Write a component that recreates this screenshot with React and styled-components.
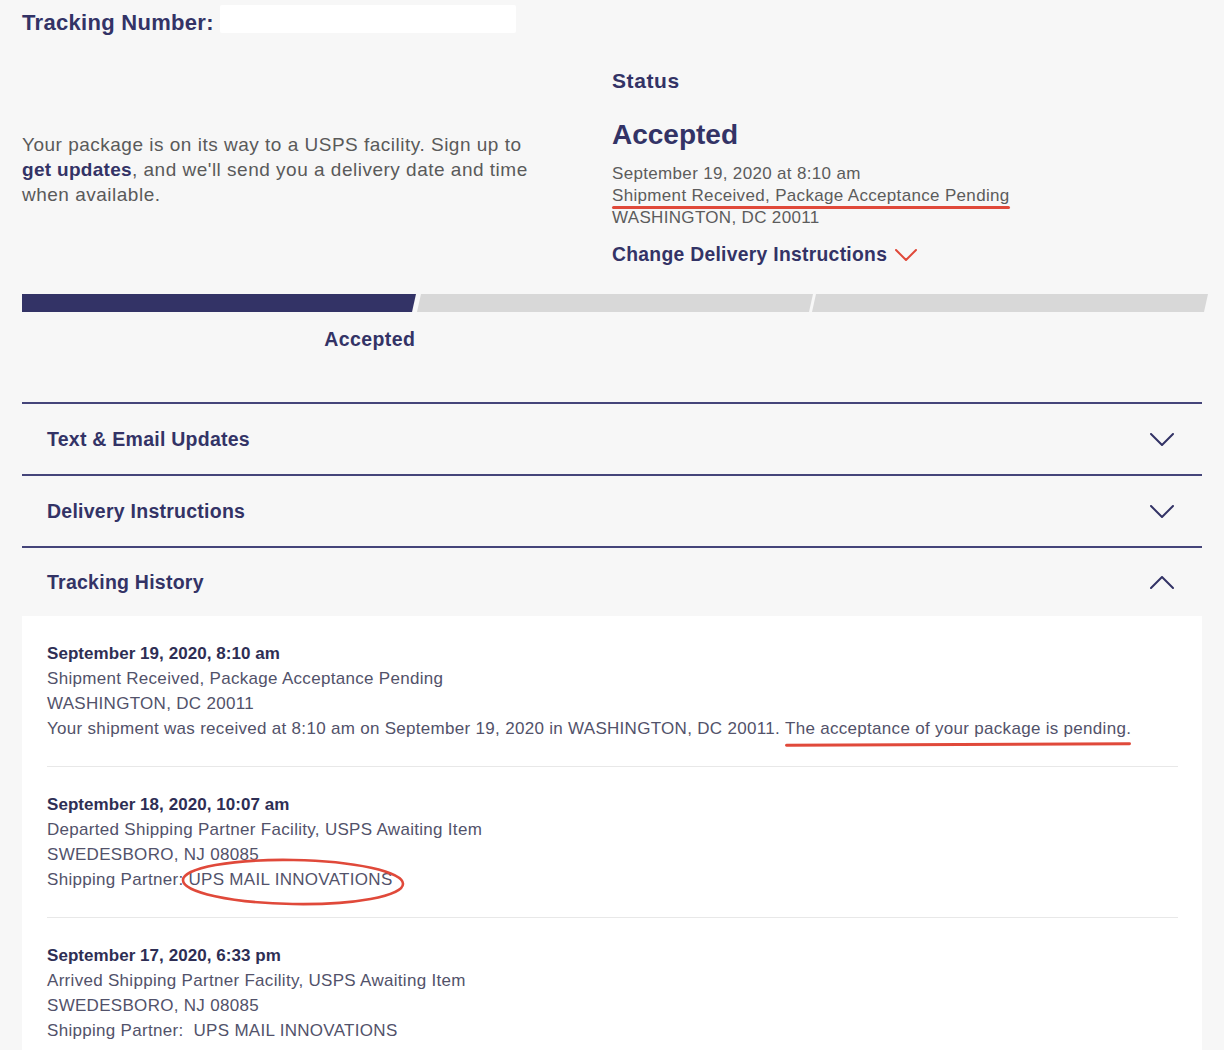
import React from "react";
import styled, { createGlobalStyle } from "styled-components";

const NAVY = "#333366";
const RED = "#e0493a";

const Global = createGlobalStyle`
  html, body { margin: 0; padding: 0; }
  body {
    background: #f7f7f7;
    font-family: "Liberation Sans", Arial, Helvetica, sans-serif;
    -webkit-font-smoothing: antialiased;
  }
`;

const Page = styled.div`
  width: 1180px;
  padding: 9px 22px 0 22px;
`;

const TrackingRow = styled.div`
  display: flex;
  align-items: center;
  height: 28px;
`;

const TrackingLabel = styled.h1`
  margin: 0;
  font-size: 22px;
  font-weight: 700;
  color: ${NAVY};
  letter-spacing: 0.3px;
`;

const NumberBox = styled.div`
  width: 296px;
  height: 28px;
  margin-left: 6px;
  margin-top: -8px;
  background: #ffffff;
  border-radius: 2px;
`;

const Summary = styled.section`
  display: grid;
  grid-template-columns: 590px 1fr;
  align-items: center;
  margin-top: 31px;
`;

const Intro = styled.p`
  margin: 0;
  font-size: 19px;
  line-height: 25px;
  letter-spacing: 0.5px;
  color: #5a5a5a;
  padding-top: 4px;
`;

const Strong = styled.strong`
  color: ${NAVY};
  font-weight: 700;
  letter-spacing: 0.3px;
`;

const StatusCol = styled.div`
  display: flex;
  flex-direction: column;
`;

const StatusLabel = styled.h2`
  margin: 0;
  font-size: 21px;
  line-height: 26px;
  font-weight: 700;
  letter-spacing: 0.6px;
  color: ${NAVY};
`;

const StatusValue = styled.div`
  margin-top: 24px;
  font-size: 28px;
  line-height: 34px;
  font-weight: 700;
  color: ${NAVY};
`;

const Details = styled.div`
  margin-top: 11px;
  font-size: 17px;
  line-height: 22px;
  letter-spacing: 0.33px;
  color: #5c5c5c;
`;

const Marked = styled.span`
  position: relative;
  display: inline-block;
  &::after {
    content: "";
    position: absolute;
    left: 0;
    right: ${(p) => p.$right || 0}px;
    bottom: ${(p) => p.$bottom || 0}px;
    height: 3px;
    border-radius: 2px;
    background: ${RED};
    transform: rotate(${(p) => p.$rot || 0}deg);
  }
`;

const ChangeLink = styled.a`
  display: flex;
  align-items: center;
  gap: 8px;
  margin-top: 14px;
  font-size: 19.3px;
  line-height: 24px;
  font-weight: 700;
  letter-spacing: 0.3px;
  color: ${NAVY};
  text-decoration: none;
`;

const Progress = styled.div`
  display: flex;
  margin-top: 27px;
  margin-right: -6px;
  height: 18px;
`;

const Segment = styled.div`
  flex: 1;
  background: ${(p) => (p.$done ? NAVY : "#d8d8d8")};
  margin-left: ${(p) => (p.$first ? 0 : -1)}px;
  clip-path: ${(p) =>
    p.$first
      ? "polygon(0 0, calc(100% - 2px) 0, calc(100% - 6px) 100%, 0 100%)"
      : "polygon(4px 0, 100% 0, calc(100% - 4px) 100%, 0 100%)"};
`;

const Labels = styled.div`
  display: grid;
  grid-template-columns: repeat(3, 1fr);
  margin-right: -6px;
  margin-top: 16px;
`;

const StepLabel = styled.div`
  text-align: right;
  padding-right: 2px;
  font-size: 19.5px;
  line-height: 22px;
  font-weight: 700;
  letter-spacing: 0.4px;
  color: ${NAVY};
`;

const Accordion = styled.div`
  margin-top: 52px;
`;

const AccRow = styled.div`
  display: flex;
  align-items: center;
  justify-content: space-between;
  height: ${(p) => (p.$open ? 68 : 70)}px;
  border-top: 2px solid #45457a;
  padding: 0 28px 0 25px;
`;

const AccTitle = styled.h3`
  margin: 0;
  font-size: 19.5px;
  font-weight: 700;
  letter-spacing: 0.25px;
  color: ${NAVY};
`;

const History = styled.div`
  background: #ffffff;
  padding: 0 24px 0 25px;
`;

const Entry = styled.div`
  padding: 25px 0;
  border-bottom: 1px solid #e8e8e8;
  font-size: 17px;
  line-height: 25px;
  letter-spacing: 0.3px;
  color: #52526a;
  &:last-child { border-bottom: none; }
`;

const EntryDate = styled.div`
  font-weight: 700;
  color: #2e2e54;
  letter-spacing: 0.05px;
`;

const Circled = styled.span`
  position: relative;
`;

const Ellipse = styled.svg`
  position: absolute;
  left: -7px;
  top: -12px;
  overflow: visible;
`;

const Chevron = ({ up, color = NAVY, w = 24, h = 13, sw = 2 }) => (
  <svg width={w} height={h} viewBox={`0 0 ${w} ${h}`} fill="none">
    <path
      d={up ? `M1 ${h - 1} L${w / 2} 1 L${w - 1} ${h - 1}` : `M1 1 L${w / 2} ${h - 1} L${w - 1} 1`}
      stroke={color}
      strokeWidth={sw}
      strokeLinecap="round"
      strokeLinejoin="round"
    />
  </svg>
);

const entries = [
  {
    date: "September 19, 2020, 8:10 am",
    lines: ["Shipment Received, Package Acceptance Pending", "WASHINGTON, DC 20011"],
    extra: "pending",
  },
  {
    date: "September 18, 2020, 10:07 am",
    lines: ["Departed Shipping Partner Facility, USPS Awaiting Item", "SWEDESBORO, NJ 08085"],
    extra: "circled",
  },
  {
    date: "September 17, 2020, 6:33 pm",
    lines: ["Arrived Shipping Partner Facility, USPS Awaiting Item", "SWEDESBORO, NJ 08085"],
    extra: "partner",
  },
];

export default function App() {
  return (
    <>
      <Global />
      <Page>
        <TrackingRow>
          <TrackingLabel>Tracking Number:</TrackingLabel>
          <NumberBox />
        </TrackingRow>

        <Summary>
          <Intro>
            Your package is on its way to a USPS facility. Sign up to
            <br />
            <Strong>get updates</Strong>, and we'll send you a delivery date and time
            <br />
            when available.
          </Intro>
          <StatusCol>
            <StatusLabel>Status</StatusLabel>
            <StatusValue>Accepted</StatusValue>
            <Details>
              <div>September 19, 2020 at 8:10 am</div>
              <div>
                <Marked $bottom={-2}>Shipment Received, Package Acceptance Pending</Marked>
              </div>
              <div>WASHINGTON, DC 20011</div>
            </Details>
            <ChangeLink href="#">
              Change Delivery Instructions
              <Chevron color={RED} w={22} h={12} sw={2} />
            </ChangeLink>
          </StatusCol>
        </Summary>

        <Progress>
          <Segment $first $done />
          <Segment />
          <Segment />
        </Progress>
        <Labels>
          <StepLabel>Accepted</StepLabel>
        </Labels>

        <Accordion>
          <AccRow>
            <AccTitle>Text &amp; Email Updates</AccTitle>
            <Chevron />
          </AccRow>
          <AccRow>
            <AccTitle>Delivery Instructions</AccTitle>
            <Chevron />
          </AccRow>
          <AccRow $open>
            <AccTitle>Tracking History</AccTitle>
            <Chevron up />
          </AccRow>
          <History>
            {entries.map((e) => (
              <Entry key={e.date}>
                <EntryDate>{e.date}</EntryDate>
                {e.lines.map((l) => (
                  <div key={l}>{l}</div>
                ))}
                {e.extra === "pending" && (
                  <div>
                    Your shipment was received at 8:10 am on September 19, 2020 in WASHINGTON, DC
                    20011.{" "}
                    <Marked $bottom={-5} $rot={-0.25}>
                      The acceptance of your package is pending.
                    </Marked>
                  </div>
                )}
                {e.extra === "circled" && (
                  <div>
                    Shipping Partner:&nbsp;
                    <Circled>
                      UPS MAIL INNOVATIONS
                      <Ellipse width="224" height="48" viewBox="0 0 224 48">
                        <ellipse
                          cx="112"
                          cy="24"
                          rx="110"
                          ry="22"
                          fill="none"
                          stroke={RED}
                          strokeWidth="2.6"
                          transform="rotate(1 112 24)"
                        />
                      </Ellipse>
                    </Circled>
                  </div>
                )}
                {e.extra === "partner" && <div>Shipping Partner:&nbsp; UPS MAIL INNOVATIONS</div>}
              </Entry>
            ))}
          </History>
        </Accordion>
      </Page>
    </>
  );
}
